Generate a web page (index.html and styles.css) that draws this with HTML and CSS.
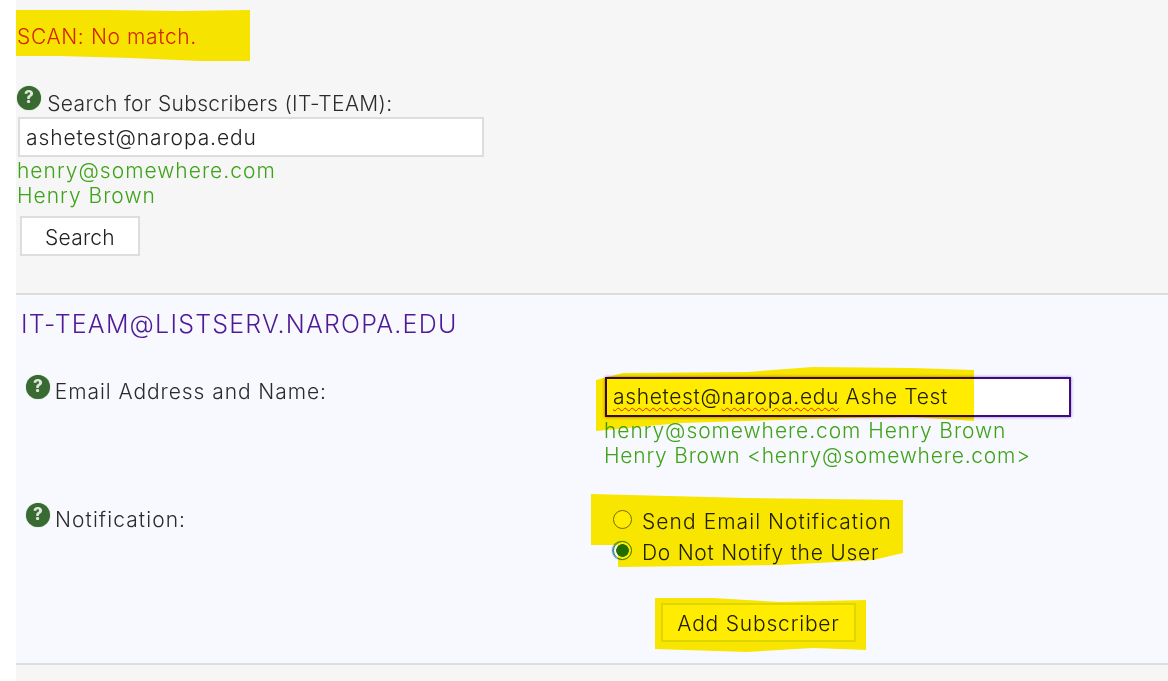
FILE: index.html
```html
<!DOCTYPE html>
<html lang="en">
<head>
<meta charset="utf-8">
<title>Subscribers</title>
<link rel="stylesheet" href="styles.css">
</head>
<body>
<main class="page">
  <section class="search">
    <p class="scan">SCAN: No match.</p>
    <div class="label label-search"><span class="help">?</span> Search for Subscribers (IT-TEAM):</div>
    <input class="field field-search" type="text" value="ashetest@naropa.edu" spellcheck="false">
    <div class="hints">henry@somewhere.com<br>Henry Brown</div>
    <button class="btn btn-search" type="button">Search</button>
  </section>
  <section class="list">
    <h2 class="title">IT-TEAM@LISTSERV.NAROPA.EDU</h2>
    <div class="form">
      <div class="label label-email"><span class="help">?</span> Email Address and Name:</div>
      <div class="cell">
        <div class="field field-focus"><span class="typo">ashetest</span>@<span class="typo">naropa.edu</span> Ashe Test</div>
        <div class="hints"><span class="hint-a">henry@somewhere.com Henry Brown</span><br><span class="hint-b">Henry Brown &lt;henry@somewhere.com&gt;</span></div>
      </div>
      <div class="label label-note"><span class="help">?</span> Notification:</div>
      <div class="cell cell-note">
        <label class="radio radio-send"><input type="radio" name="notify"><span class="radio-text">Send Email Notification</span></label>
        <label class="radio radio-none"><input type="radio" name="notify" checked><span class="radio-text">Do Not Notify the User</span></label>
        <button class="btn btn-add" type="button">Add Subscriber</button>
      </div>
    </div>
  </section>
</main>
<svg class="marker" viewBox="0 0 1168 681" aria-hidden="true">
  <polygon points="16,10 110,10 180,11 250,10 250,61 200,61 130,58 60,56 16,56"/>
  <polygon points="596,380 623,373 747,372 813,367 913,368 974,370 974,421 913,417 847,418 680,423 596,431"/>
  <polygon points="591,494 630,495 747,498 903,500 903,553 873,560 780,565 618,567 618,545 591,545"/>
  <polygon points="655,598 713,598 780,602 866,600 866,650 813,648 747,652 655,649"/>
</svg>
</body>
</html>
```
FILE: styles.css
```css
* { box-sizing: border-box; }
html, body { margin: 0; height: 681px; overflow: hidden; background: #fff; }
body {
  position: relative;
  font-family: Inter, "Open Sans", sans-serif;
  font-size: 21px;
  line-height: 25px;
  font-weight: 300;
  letter-spacing: 0.7px;
  color: #222;
}
.page { margin-left: 16px; height: 681px; background: #f6f6f6; }
.search { height: 295px; padding: 24px 0 0; border-bottom: 2px solid #ddd; }
.scan { margin: 0 0 40px 1px; color: #d4270f; letter-spacing: 0.63px; }
.label { color: #2b2b2b; }
.label-search { margin-left: 1px; height: 28px; padding-top: 2px; letter-spacing: 0.33px; }
.label-email { padding-top: 2px; letter-spacing: 0.93px; }
.label-email .help, .label-note .help { margin-right: -2px; vertical-align: 7px; }
.help {
  display: inline-flex;
  align-items: center;
  justify-content: center;
  width: 24px;
  height: 24px;
  margin-top: -12px;
  border-radius: 50%;
  background: #386a32;
  box-shadow: 0 0 1px #6d9468;
  color: #dfe7dc;
  font-size: 17px;
  font-weight: 800;
  letter-spacing: 0;
  line-height: 1;
  vertical-align: 8px;
}
.field {
  display: block;
  height: 40px;
  padding: 0 6px;
  border: 2px solid #ddd;
  background: #fff;
  color: #222;
  font: inherit;
  letter-spacing: inherit;
  line-height: 36px;
}
.field-search { width: 466px; margin-left: 2px; outline: none; letter-spacing: 0.9px; }
.hints { margin: 1px 0 0 1px; color: #3ea31a; letter-spacing: 1px; }
.btn {
  display: block;
  height: 40px;
  border: 2px solid #ddd;
  background: #fff;
  color: #222;
  font: inherit;
  letter-spacing: inherit;
  padding: 2px 0 0;
  text-align: center;
}
.btn-search { width: 120px; margin: 8px 0 0 4px; letter-spacing: 0.23px; }
.list { height: 370px; padding: 17px 0 0; background: #f8f9ff; border-bottom: 2px solid #ddd; }
.title {
  margin: 0 0 40px 5px;
  font-size: 25px;
  line-height: 25px;
  font-weight: 300;
  letter-spacing: 1.2px;
  color: #4f1a96;
}
.form { display: grid; grid-template-columns: 578px 1fr; padding-left: 10px; }
.field-focus {
  width: 466px;
  margin-left: 1px;
  border-color: #3d0a82;
  box-shadow: 0 0 3px rgba(80, 20, 150, 0.6);
  letter-spacing: 0.65px;
}
.typo { text-decoration: underline wavy #e8232a 1px; text-underline-offset: 3px; }
.list .hints { margin-left: 0; }
.hint-a { letter-spacing: 0.93px; }
.hint-b { letter-spacing: 0.78px; }
.label-note { margin-top: 39px; letter-spacing: 1.08px; }
.cell-note { margin-top: 36px; }
.radio { display: flex; align-items: center; gap: 10px; height: 31px; margin-left: 9px; color: #222; }
.radio-send { letter-spacing: 1.06px; }
.radio-none { letter-spacing: 0.73px; }
.radio-text { padding-top: 3px; }
.radio input {
  appearance: none;
  width: 19px;
  height: 19px;
  margin: 0;
  border: 1px solid #767676;
  border-radius: 50%;
  background: #fff;
}
.radio input:checked {
  border-color: #2f7d16;
  background: radial-gradient(circle, #23750f 0 6px, #fff 6.7px);
  box-shadow: -1px 0 1px #2f7df0;
}
.btn-add { width: 195px; height: 39px; margin: 37px 0 0 57px; letter-spacing: 0.8px; border-color: #dfe6cc; }
.marker {
  position: absolute;
  left: 0;
  top: 0;
  width: 1168px;
  height: 681px;
  mix-blend-mode: multiply;
  pointer-events: none;
}
.marker polygon { fill: #ffec00; }
```
